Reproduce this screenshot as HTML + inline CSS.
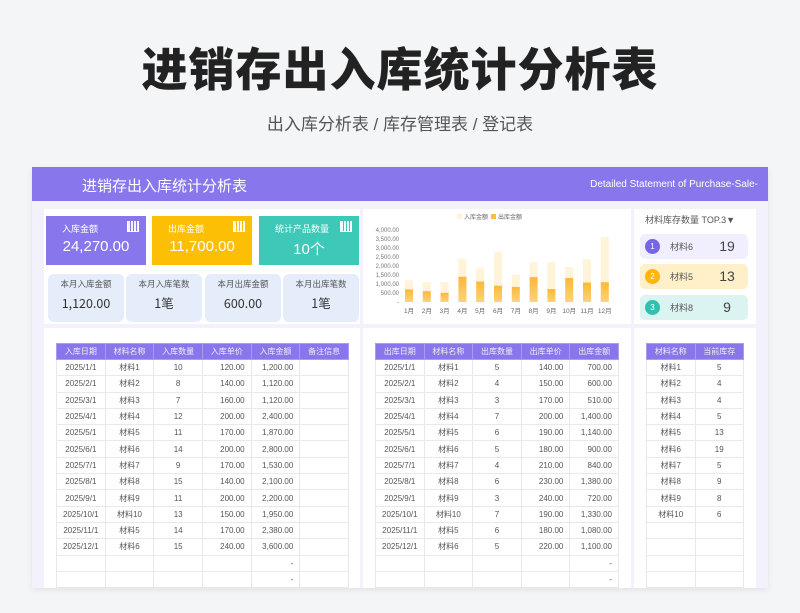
<!DOCTYPE html>
<html><head><meta charset="utf-8"><style>
*{margin:0;padding:0;box-sizing:border-box}
body{width:800px;height:613px;background:#f4f5f7;font-family:"Liberation Sans","Noto Sans CJK SC",sans-serif;position:relative;overflow:hidden;color:#555}
.a{position:absolute}
h1{position:absolute;left:0;width:800px;top:40px;text-align:center;font-size:46px;font-weight:900;color:#222;letter-spacing:1px;line-height:60px}
.sub{position:absolute;left:0;width:800px;top:112px;text-align:center;font-size:17px;color:#555;line-height:26px}
.dash{left:32px;top:167px;width:736px;height:421px;background:#f2f1fc;box-shadow:0 2px 6px rgba(0,0,0,.08)}
.hdr{left:32px;top:167px;width:736px;height:34px;background:#8877ec;color:#fff}
.w{background:#fff}
.card{color:#fff;font-size:9px}
.card .t{position:absolute;left:16px;top:6px}
.card .v{position:absolute;left:0;width:100%;text-align:center;top:22px;font-size:15px}
.ic{position:absolute;right:7px;top:5px;width:12px;height:11px;border:1px solid rgba(255,255,255,.8);border-top:none;background:repeating-linear-gradient(90deg,rgba(255,255,255,.9) 0 2px,transparent 2px 3px)}
.sc{background:#e5edfa;border-radius:6px;text-align:center;font-size:8.5px;color:#555;font-family:"Noto Sans CJK SC",sans-serif}
.sc .v{font-size:12.5px;color:#333;margin-top:5px;line-height:16px}
.sc .t{margin-top:4px}
table{position:absolute;border-collapse:collapse;font-size:8px;color:#555;table-layout:fixed}
th{background:#8877ec;color:#eee;font-weight:normal;height:16px;border:1px solid #a79cf2}
td{height:16.3px;border:1px solid #e8e8ee;text-align:center;background:#fff}
td.r{text-align:right;padding-right:6px}
.it{left:640px;width:108px;height:25px;border-radius:5px;font-size:9px;color:#555}
.it .c{position:absolute;left:5px;top:5px;width:15px;height:15px;border-radius:50%;color:#fff;font-size:8px;text-align:center;line-height:15px}
.it .n{position:absolute;left:30px;top:6px}
.it .q{position:absolute;left:72px;top:4px;font-size:14px;color:#444;width:30px;text-align:center}
</style></head><body>
<h1>进销存出入库统计分析表</h1>
<div class="sub">出入库分析表 / 库存管理表 / 登记表</div>
<div class="a dash"></div>
<div class="a hdr"><div class="a" style="left:50px;top:8px;font-size:15px">进销存出入库统计分析表</div><div class="a" style="right:10px;top:12px;font-size:10px">Detailed Statement of Purchase-Sale-</div></div>
<div class="a w" style="left:44px;top:209px;width:316px;height:115px"></div>
<div class="a w" style="left:363px;top:209px;width:268px;height:115px"></div>
<div class="a w" style="left:634px;top:209px;width:122px;height:115px"></div>
<div class="a w" style="left:44px;top:328px;width:316px;height:260px"></div>
<div class="a w" style="left:363px;top:328px;width:268px;height:260px"></div>
<div class="a w" style="left:634px;top:328px;width:122px;height:260px"></div>

<div class="a card" style="left:46px;top:216px;width:100px;height:49px;background:#8877ec"><div class="t">入库金额</div><div class="v">24,270.00</div><div class="ic"></div></div>
<div class="a card" style="left:152px;top:216px;width:100px;height:49px;background:#fdbf05"><div class="t">出库金额</div><div class="v">11,700.00</div><div class="ic"></div></div>
<div class="a card" style="left:259px;top:216px;width:100px;height:49px;background:#3ec8b8"><div class="t">统计产品数量</div><div class="v">10个</div><div class="ic"></div></div>

<div class="a sc" style="left:48px;top:274px;width:76px;height:48px"><div class="t">本月入库金额</div><div class="v">1,120.00</div></div>
<div class="a sc" style="left:126px;top:274px;width:76px;height:48px"><div class="t">本月入库笔数</div><div class="v">1笔</div></div>
<div class="a sc" style="left:205px;top:274px;width:76px;height:48px"><div class="t">本月出库金额</div><div class="v">600.00</div></div>
<div class="a sc" style="left:283px;top:274px;width:76px;height:48px"><div class="t">本月出库笔数</div><div class="v">1笔</div></div>

<svg class="a" style="left:363px;top:209px" width="268" height="115" font-family="Liberation Sans,Noto Sans CJK SC,sans-serif">
<rect x="94" y="5" width="5" height="5" fill="#fff3d6"/><text x="101" y="10" font-size="6" fill="#666">入库金额</text>
<rect x="128" y="5" width="5" height="5" fill="#fdbf3a"/><text x="135" y="10" font-size="6" fill="#666">出库金额</text>
<g font-size="6" fill="#777" text-anchor="end">
<text x="36" y="23">4,000.00</text><text x="36" y="32">3,500.00</text><text x="36" y="41">3,000.00</text><text x="36" y="50">2,500.00</text><text x="36" y="59">2,000.00</text><text x="36" y="68">1,500.00</text><text x="36" y="77">1,000.00</text><text x="36" y="86">500.00</text><text x="36" y="95">-</text></g>
<defs><linearGradient id="g" x1="0" y1="0" x2="0" y2="1"><stop offset="0" stop-color="#fbb836"/><stop offset="1" stop-color="#fdd37a"/></linearGradient></defs>
<g id="bars"></g>
<g font-size="6.5" fill="#666" text-anchor="middle" id="lab"></g>
</svg>
<script>
(function(){var inn=[1200,1120,1120,2400,1870,2800,1530,2200,2200,1950,2380,3600],out=[700,600,510,1400,1140,900,840,1380,720,1330,1080,1100];
var b='',l='';for(var i=0;i<12;i++){var x=46+i*17.8,h1=inn[i]*72/4000,h2=out[i]*72/4000;
b+='<rect x="'+(x-4)+'" y="'+(93-h1)+'" width="8" height="'+h1+'" fill="#fff4d9"/><rect x="'+(x-4)+'" y="'+(93-h2)+'" width="8" height="'+h2+'" fill="url(#g)"/>';
l+='<text x="'+x+'" y="104">'+(i+1)+'月</text>';}
document.getElementById('bars').innerHTML=b;document.getElementById('lab').innerHTML=l;})();
</script>

<div class="a" style="left:645px;top:213px;font-size:9px;color:#555">材料库存数量 TOP.3▼</div>
<div class="a it" style="top:234px;background:#f1effe"><div class="c" style="background:#7665e6">1</div><div class="n">材料6</div><div class="q">19</div></div>
<div class="a it" style="top:264px;background:#fff0c9"><div class="c" style="background:#fdb60a">2</div><div class="n">材料5</div><div class="q">13</div></div>
<div class="a it" style="top:295px;background:#dbf4f1"><div class="c" style="background:#30c0b2">3</div><div class="n">材料8</div><div class="q">9</div></div>

<table style="left:56px;top:343px;width:293px">
<tr><th>入库日期</th><th>材料名称</th><th>入库数量</th><th>入库单价</th><th>入库金额</th><th>备注信息</th></tr>
<tr><td>2025/1/1</td><td>材料1</td><td>10</td><td class="r">120.00</td><td class="r">1,200.00</td><td></td></tr>
<tr><td>2025/2/1</td><td>材料2</td><td>8</td><td class="r">140.00</td><td class="r">1,120.00</td><td></td></tr>
<tr><td>2025/3/1</td><td>材料3</td><td>7</td><td class="r">160.00</td><td class="r">1,120.00</td><td></td></tr>
<tr><td>2025/4/1</td><td>材料4</td><td>12</td><td class="r">200.00</td><td class="r">2,400.00</td><td></td></tr>
<tr><td>2025/5/1</td><td>材料5</td><td>11</td><td class="r">170.00</td><td class="r">1,870.00</td><td></td></tr>
<tr><td>2025/6/1</td><td>材料6</td><td>14</td><td class="r">200.00</td><td class="r">2,800.00</td><td></td></tr>
<tr><td>2025/7/1</td><td>材料7</td><td>9</td><td class="r">170.00</td><td class="r">1,530.00</td><td></td></tr>
<tr><td>2025/8/1</td><td>材料8</td><td>15</td><td class="r">140.00</td><td class="r">2,100.00</td><td></td></tr>
<tr><td>2025/9/1</td><td>材料9</td><td>11</td><td class="r">200.00</td><td class="r">2,200.00</td><td></td></tr>
<tr><td>2025/10/1</td><td>材料10</td><td>13</td><td class="r">150.00</td><td class="r">1,950.00</td><td></td></tr>
<tr><td>2025/11/1</td><td>材料5</td><td>14</td><td class="r">170.00</td><td class="r">2,380.00</td><td></td></tr>
<tr><td>2025/12/1</td><td>材料6</td><td>15</td><td class="r">240.00</td><td class="r">3,600.00</td><td></td></tr>
<tr><td></td><td></td><td></td><td></td><td class="r">-</td><td></td></tr>
<tr><td></td><td></td><td></td><td></td><td class="r">-</td><td></td></tr>
</table>

<table style="left:375px;top:343px;width:244px">
<tr><th>出库日期</th><th>材料名称</th><th>出库数量</th><th>出库单价</th><th>出库金额</th></tr>
<tr><td>2025/1/1</td><td>材料1</td><td>5</td><td class="r">140.00</td><td class="r">700.00</td></tr>
<tr><td>2025/2/1</td><td>材料2</td><td>4</td><td class="r">150.00</td><td class="r">600.00</td></tr>
<tr><td>2025/3/1</td><td>材料3</td><td>3</td><td class="r">170.00</td><td class="r">510.00</td></tr>
<tr><td>2025/4/1</td><td>材料4</td><td>7</td><td class="r">200.00</td><td class="r">1,400.00</td></tr>
<tr><td>2025/5/1</td><td>材料5</td><td>6</td><td class="r">190.00</td><td class="r">1,140.00</td></tr>
<tr><td>2025/6/1</td><td>材料6</td><td>5</td><td class="r">180.00</td><td class="r">900.00</td></tr>
<tr><td>2025/7/1</td><td>材料7</td><td>4</td><td class="r">210.00</td><td class="r">840.00</td></tr>
<tr><td>2025/8/1</td><td>材料8</td><td>6</td><td class="r">230.00</td><td class="r">1,380.00</td></tr>
<tr><td>2025/9/1</td><td>材料9</td><td>3</td><td class="r">240.00</td><td class="r">720.00</td></tr>
<tr><td>2025/10/1</td><td>材料10</td><td>7</td><td class="r">190.00</td><td class="r">1,330.00</td></tr>
<tr><td>2025/11/1</td><td>材料5</td><td>6</td><td class="r">180.00</td><td class="r">1,080.00</td></tr>
<tr><td>2025/12/1</td><td>材料6</td><td>5</td><td class="r">220.00</td><td class="r">1,100.00</td></tr>
<tr><td></td><td></td><td></td><td></td><td class="r">-</td></tr>
<tr><td></td><td></td><td></td><td></td><td class="r">-</td></tr>
</table>

<table style="left:646px;top:343px;width:98px">
<tr><th>材料名称</th><th>当前库存</th></tr>
<tr><td>材料1</td><td>5</td></tr><tr><td>材料2</td><td>4</td></tr><tr><td>材料3</td><td>4</td></tr><tr><td>材料4</td><td>5</td></tr><tr><td>材料5</td><td>13</td></tr><tr><td>材料6</td><td>19</td></tr><tr><td>材料7</td><td>5</td></tr><tr><td>材料8</td><td>9</td></tr><tr><td>材料9</td><td>8</td></tr><tr><td>材料10</td><td>6</td></tr>
<tr><td></td><td></td></tr><tr><td></td><td></td></tr><tr><td></td><td></td></tr><tr><td></td><td></td></tr>
</table>
</body></html>
